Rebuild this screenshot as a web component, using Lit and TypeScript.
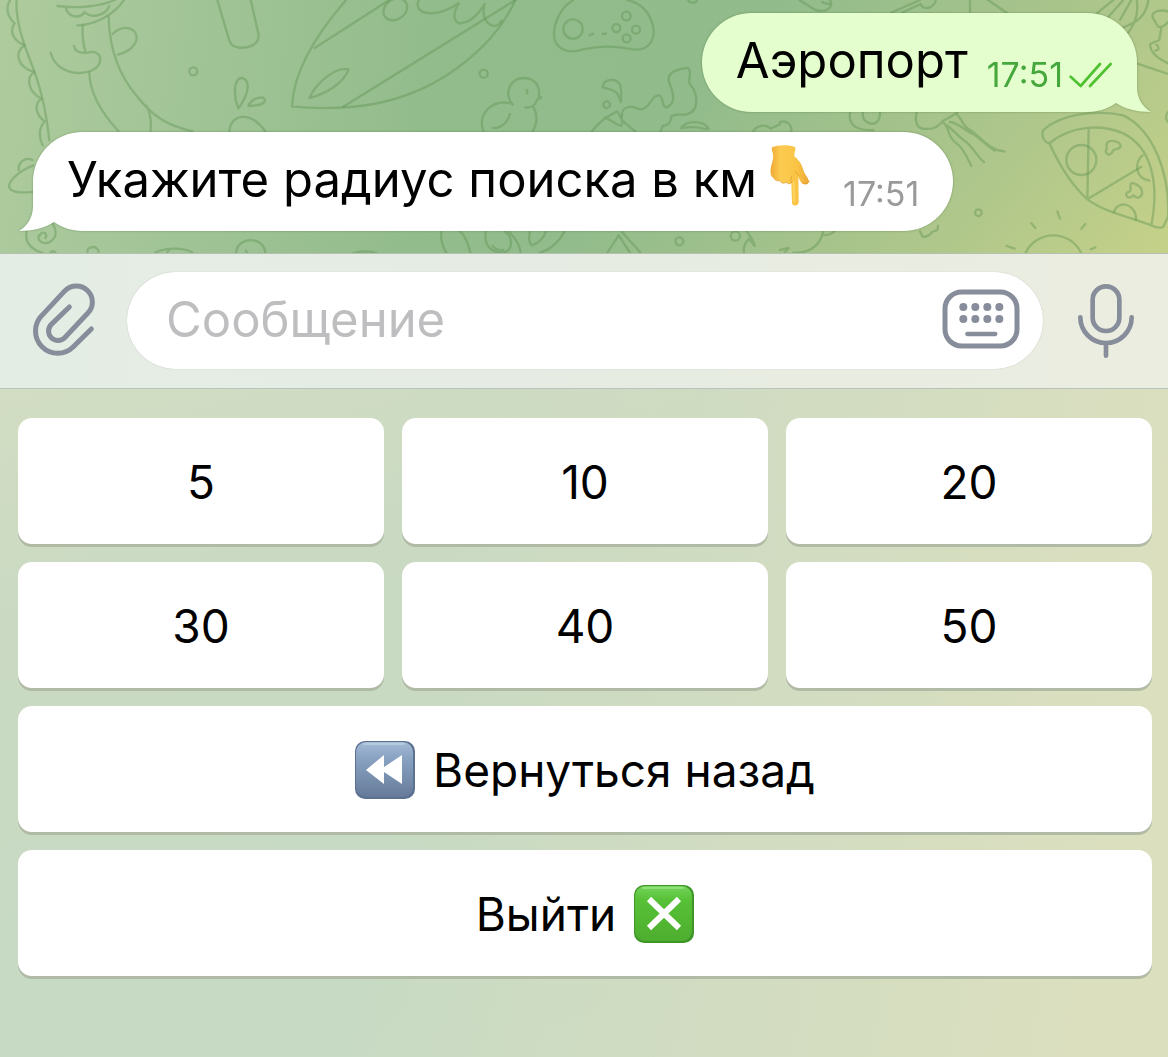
import { LitElement, html, svg, css, nothing } from "lit";
import { customElement, property } from "lit/decorators.js";

/* Line-art doodles behind the conversation. */
const doodles = svg`
  <path d="M50 0C46 50 60 105 90 180C118 250 135 310 148 420"/>
  <path d="M30 0C16 22 22 50 44 70C28 90 36 120 74 136C46 154 46 198 102 216C78 234 84 276 124 296C102 312 106 344 134 364C116 384 116 412 128 436"/>
  <path d="M172 18C230 26 300 20 345 0M198 26C206 52 240 58 254 36C272 56 316 48 328 18M232 76C290 74 345 40 372 0"/>
  <path d="M248 78C246 110 250 135 257 158M222 138C226 158 244 160 262 158C290 150 304 166 300 184C294 212 258 220 232 219C190 216 160 192 152 158"/>
  <path d="M268 218C270 290 315 350 356 394M326 50C328 150 360 230 412 290C460 350 500 376 578 394M440 318C452 340 454 370 452 394"/>
  <path d="M338 102C372 70 412 84 410 118C404 142 380 158 354 164"/>
  <path d="M652 0L688 122C696 146 730 148 758 136C776 126 778 112 774 96L752 0"/>
  <circle cx="580" cy="214" r="12"/>
  <path d="M715 326C700 290 700 232 726 234C752 240 748 280 715 326ZM745 318C758 290 796 286 795 302C788 318 764 316 745 318Z"/>
  <path d="M688 394C692 340 752 332 796 394"/>
  <path d="M100 496C50 516 18 550 30 566C40 580 70 577 100 576M56 510C54 486 76 470 98 480"/>
  <path d="M80 694C72 730 100 750 130 760M116 706C110 736 156 738 166 706C168 690 164 680 158 672M120 706C124 690 146 700 136 714"/>
  <path d="M262 756C262 736 294 736 296 756M466 758C500 742 550 742 578 758M508 748L500 760M708 758C712 708 792 708 796 758M738 752L742 760"/>
  <path d="M1060 760C1080 752 1110 752 1130 760M150 760C154 752 162 752 166 758"/>
  <path d="M1038 0C960 90 880 210 876 320C1050 334 1200 316 1340 226C1440 160 1510 80 1546 0"/>
  <path d="M944 144L1168 0M1030 320L1546 0M928 294C950 246 1010 198 1046 208C1030 250 980 280 928 294Z"/>
  <ellipse cx="1186" cy="28" rx="38" ry="30" transform="rotate(-35 1186 28)"/>
  <path d="M1256 0C1238 40 1300 60 1376 10C1352 50 1366 78 1390 68C1420 60 1436 40 1454 12C1444 50 1460 76 1484 78C1496 76 1500 70 1504 62"/>
  <path d="M1720 0C1674 26 1656 86 1664 120C1680 160 1720 158 1750 148C1800 136 1860 140 1900 148C1944 154 1966 120 1960 84C1950 30 1916 8 1882 0"/>
  <circle cx="1719" cy="87" r="29"/><circle cx="1849" cy="84" r="12"/><circle cx="1879" cy="48" r="13"/><circle cx="1908" cy="89" r="12"/><circle cx="1880" cy="115" r="12"/>
  <path d="M1768 106L1780 101M1808 102L1818 101M2064 0C2070 10 2084 12 2092 0"/>
  <circle cx="1451" cy="221" r="12"/><circle cx="1820" cy="314" r="10"/>
  <path d="M1538 314C1510 280 1530 234 1572 234C1608 236 1622 262 1616 288L1624 292L1612 298C1604 320 1590 324 1576 322M1580 270L1582 280M1538 312C1480 294 1430 340 1450 394M1530 342C1522 370 1500 386 1478 384M1600 320C1616 350 1610 374 1598 394"/>
  <path d="M1808 262C1810 236 1846 232 1860 254C1866 274 1864 290 1862 306C1854 270 1838 270 1808 262Z"/>
  <path d="M1776 394C1800 360 1830 344 1852 334C1862 350 1870 362 1866 374C1858 384 1842 362 1814 352M1866 360C1880 372 1890 384 1906 394"/>
  <path d="M1866 350C1864 318 1890 314 1920 328C1950 330 1950 286 1976 286C1994 290 1982 322 2000 322C2030 310 2020 276 2006 244C2000 214 2040 206 2064 204C2080 220 2060 238 2070 252C2100 290 2096 346 2046 344C2030 342 2022 346 2014 348C2014 364 2006 376 1988 378L1982 394"/>
  <path d="M2044 384C2060 360 2110 360 2126 386C2104 392 2110 374 2044 384ZM2260 394C2270 374 2300 372 2312 386C2324 380 2334 376 2340 372"/>
  <path d="M1324 694C1320 720 1328 740 1340 760M1380 694C1400 710 1404 736 1412 760M1458 694C1450 730 1470 760 1510 758C1540 750 1540 712 1514 694M1478 738C1490 752 1500 752 1510 750M1526 694C1552 720 1560 740 1562 758M1590 694C1586 712 1588 730 1596 736C1614 730 1630 716 1638 694M1694 694C1674 730 1650 750 1620 758"/>
  <path d="M1822 758L1856 706L1890 758M1866 696L1922 758M2240 694C2252 710 2262 722 2264 738L2248 716C2232 730 2230 746 2232 758"/>
  <circle cx="2038" cy="724" r="12"/><circle cx="2206" cy="708" r="14"/>
  <path d="M2398 0L2446 30C2484 40 2500 20 2490 0M2466 6C2478 12 2488 12 2494 14M2674 38L2760 0M2706 38L2762 12C2770 30 2790 26 2800 14C2808 8 2808 4 2806 0M2910 0V38M2964 0L3020 38"/>
  <path d="M3340 0L3290 40L3350 88C3420 70 3440 40 3445 0M3370 0L3320 56M3394 0L3360 60M3410 0C3420 60 3390 90 3370 118"/>
  <path d="M3504 34C3470 26 3450 40 3460 56L3474 80C3490 84 3500 70 3504 66M3484 84L3478 120L3450 132C3450 160 3476 176 3504 190M3470 134C3480 146 3476 150 3466 152M3410 190L3504 222M3504 336C3496 348 3496 358 3504 366"/>
  <path d="M2550 338C2544 376 2570 392 2620 390M2588 338C2586 370 2620 380 2634 362C2640 354 2640 346 2640 338M2340 366C2360 360 2376 374 2374 394"/>
  <path d="M2750 338C2742 366 2754 390 2776 386C2800 390 2820 376 2830 362L2872 338M2830 368C2850 382 2840 412 2870 430C2890 444 2900 470 2914 498M2842 376C2862 394 2870 404 2890 420C2916 434 2930 470 2952 486M2850 366C2880 370 2896 394 2920 402C2940 414 2950 430 2984 452M2868 342C2890 354 2880 376 2914 392C2940 410 2950 430 2980 444C2990 452 3002 452 3014 454"/>
  <path d="M3130 390C3180 344 3280 328 3370 346C3460 390 3510 520 3504 650L3490 680C3480 686 3466 682 3454 676C3480 540 3450 440 3370 400C3300 370 3210 378 3148 430C3128 424 3124 406 3130 390ZM3148 430C3180 500 3220 560 3262 598C3320 640 3390 650 3454 676M3266 386L3262 598L3424 500"/>
  <circle cx="3244" cy="480" r="45"/>
  <path d="M3428 466C3404 482 3402 534 3448 542M3342 636C3354 598 3410 610 3408 660M3320 440C3314 414 3360 420 3362 438C3360 452 3340 440 3336 458C3328 470 3312 460 3320 446ZM3392 556C3390 540 3424 556 3426 574C3428 590 3414 600 3400 586C3386 602 3370 584 3384 576C3396 574 3390 566 3392 556Z"/>
  <circle cx="2935" cy="638" r="10"/>
  <path d="M3076 760C3110 688 3210 688 3244 760M3172 634L3180 656M3094 670L3106 684M3256 672L3244 686M3020 738L3044 746M3272 748L3286 742"/>
  <path d="M2470 694C2460 736 2430 760 2380 758M2466 704C2480 708 2496 700 2504 694M2760 694L2768 710C2780 712 2790 704 2796 696L2812 690L2814 678M2340 750L2366 744L2354 758"/>
`;

const clipIcon = html`<svg width="65" height="75" viewBox="95 93 195 225" fill="none" stroke="#878d9a" stroke-width="15" stroke-linecap="round" stroke-linejoin="round" aria-hidden="true">
  <path d="M207 168L153 220A28 28 0 0 0 193 260L262 187A48 48 0 0 0 194 119L125 193A66 66 0 0 0 219 287L273 234"/></svg>`;

const keyboardIcon = html`<svg width="78" height="60" viewBox="125 117 234 180" fill="#878d9a" aria-hidden="true">
  <rect x="134" y="126" width="216" height="162" rx="50" fill="none" stroke="#878d9a" stroke-width="15"/>
  ${[171, 207].map((y) => [189, 225, 261, 297].map((x) => svg`<circle cx=${x} cy=${y} r="12"/>`))}
  <path d="M201 252H285" stroke="#878d9a" stroke-width="13" stroke-linecap="round"/></svg>`;

const micIcon = html`<svg width="58" height="76" viewBox="531 98 174 228" fill="none" stroke="#878d9a" stroke-width="14" stroke-linecap="round" aria-hidden="true">
  <rect x="578" y="108" width="80" height="134" rx="40"/>
  <path d="M541 201A77 77 0 0 0 695 201M618 280V316"/></svg>`;

const ticksIcon = html`<svg class="ticks" width="45" height="26" viewBox="864 184 135 78" fill="none" stroke="#50c232" stroke-width="8" stroke-linecap="round" stroke-linejoin="round" role="img" aria-label="Прочитано">
  <path d="M872 228L902 256L960 190M930 256L992 190"/></svg>`;

const handIcon = html`<svg class="hand" width="42" height="64" viewBox="24 20 126 192" role="img" aria-label="👇">
  <defs>
    <linearGradient id="skin" x1="0" y1="0" x2="1" y2="0"><stop offset="0" stop-color="#f0aa35"/><stop offset=".25" stop-color="#fbcb50"/><stop offset=".7" stop-color="#fac445"/><stop offset="1" stop-color="#eba636"/></linearGradient>
  </defs>
  <path d="M33 30C50 22 84 22 102 29C106 34 98 48 101 58C112 66 122 78 128 100C132 114 142 120 144 132C142 144 130 142 122 136C116 130 114 124 112 116L113 194C112 208 94 208 93 196L91 136C88 142 78 140 76 134C70 140 60 138 57 130C50 132 40 128 38 122C26 118 28 96 31 84C34 72 38 64 36 52C35 44 31 36 33 30Z" fill="url(#skin)"/>
  <path d="M38 122C42 130 50 132 57 130C60 138 70 140 76 134C78 140 88 142 91 136M91 136C90 128 90 122 92 116M112 116C110 108 106 104 102 102M122 136C130 142 142 142 144 132" fill="none" stroke="#dc9130" stroke-width="3" stroke-linecap="round" opacity=".6"/>
  <path d="M98 136L100 192" stroke="#ffe07a" stroke-width="5" stroke-linecap="round" opacity=".6"/></svg>`;

const rewindIcon = html`<svg width="60" height="58" viewBox="0 0 60 58" role="img" aria-label="⏪">
  <defs><linearGradient id="blue" x1="0" y1="0" x2="0" y2="1"><stop offset="0" stop-color="#a3bad5"/><stop offset=".3" stop-color="#89a2c2"/><stop offset="1" stop-color="#667b99"/></linearGradient></defs>
  <rect width="60" height="58" rx="10" fill="#5c7191"/>
  <rect x="1" y="1" width="57" height="55" rx="10" fill="url(#blue)"/>
  <path d="M9 3H49" stroke="#c6d6e8" stroke-width="2" stroke-linecap="round" opacity=".6"/>
  <path d="M11 29L29 14V26L47 14V43L29 31V43Z" fill="#fff"/></svg>`;

const crossIcon = html`<svg width="60" height="58" viewBox="0 0 60 58" role="img" aria-label="❎">
  <defs><linearGradient id="green" x1="0" y1="0" x2="0" y2="1"><stop offset="0" stop-color="#74d45a"/><stop offset=".25" stop-color="#57c137"/><stop offset="1" stop-color="#4eae2e"/></linearGradient></defs>
  <rect width="60" height="58" rx="10" fill="#3f9628"/>
  <rect x="1" y="1" width="57" height="55" rx="10" fill="url(#green)"/>
  <path d="M9 3H49" stroke="#a4e893" stroke-width="2" stroke-linecap="round" opacity=".6"/>
  <path d="M15 14L45 43M45 14L15 43" stroke="#fff" stroke-width="6"/></svg>`;

@customElement("chat-bubble")
class ChatBubble extends LitElement {
  @property() text = "";
  @property() time = "";
  @property({ type: Boolean, reflect: true }) outgoing = false;

  static styles = css`
    :host { display: flex; position: relative; gap: 32px; align-items: flex-end; align-self: flex-start;
      box-sizing: border-box; padding: 16px 34px 19px; border-radius: 50px; background: #fff; color: #000;
      filter: drop-shadow(0 0 1px rgba(50, 90, 40, 0.45)); }
    :host([outgoing]) { align-self: flex-end; gap: 19px; padding-right: 24px; background: #e5fecd; }
    .text { display: flex; gap: 12px; align-items: center; font-size: 49px; line-height: 64px; }
    .meta { display: flex; gap: 5px; align-items: center; padding-bottom: 2px; font-size: 34px; line-height: 32px;
      color: #9a9a9a; }
    :host([outgoing]) .meta { color: #46a83c; }
    .tail { position: absolute; bottom: 0; left: -14px; fill: #fff; transform: scaleX(-1); }
    :host([outgoing]) .tail { left: auto; right: -14px; fill: #e5fecd; transform: none; }
    svg { display: block; }
    .hand { padding-bottom: 4px; margin-top: -4px; }
  `;

  render() {
    return html`
      <svg class="tail" width="48" height="50" viewBox="0 0 48 50" aria-hidden="true">
        <path d="M34 0V25C34 37 40 45 48 50C34 50 22 47 13 41L0 20Z"/>
      </svg>
      <span class="text">${this.text}${this.outgoing ? nothing : handIcon}</span>
      <span class="meta"><time>${this.time}</time>${this.outgoing ? ticksIcon : nothing}</span>
    `;
  }
}

@customElement("app-root")
class AppRoot extends LitElement {
  static styles = css`
    :host { display: flex; flex-direction: column; min-height: 100vh; font-family: Inter, "Liberation Sans", sans-serif; color: #000; }
    svg { display: block; }
    button { font: inherit; color: inherit; border: 0; margin: 0; padding: 0; background: none; cursor: pointer; }
    .chat { position: relative; display: flex; flex-direction: column; gap: 20px; padding: 13px 31px 22px 33px; overflow: hidden;
      background: linear-gradient(130deg, rgba(160, 195, 138, 0) 56%, #b2c88b 85%, #c5d188 100%),
        linear-gradient(97deg, #aecb9d 0%, #a3c598 14%, #93bc8c 36%, #8fba8b 100%); }
    .wallpaper { position: absolute; inset: 0; width: 100%; height: 100%; fill: none; stroke: #5c9150; stroke-opacity: 0.4; stroke-width: 7;
      stroke-linecap: round; stroke-linejoin: round; }
    .composer { display: flex; align-items: center; padding: 18px 0 19px; border-top: 1px solid #b4c0b2; border-bottom: 1px solid #b9c3bd;
      background: linear-gradient(90deg, #e4ede4, #e6ece3 45%, #ebede0); }
    .tool { flex: 0 0 125px; display: flex; justify-content: center; }
    .attach { padding: 0 0 3px 3px; box-sizing: border-box; }
    .field { flex: 1; min-width: 0; display: flex; align-items: center; gap: 20px; margin-left: 2px; padding: 0 23px 0 39px; border-radius: 50px;
      background: #fff; box-shadow: 0 0 1px rgba(0, 0, 0, 0.25); }
    .field button { padding-bottom: 3px; }
    input { flex: 1; min-width: 0; height: 97px; box-sizing: border-box; padding: 0 0 2px; border: 0; outline: 0; background: none;
      font: inherit; font-size: 49px; color: #000; }
    input::placeholder { color: #bebec0; opacity: 1; }
    .keyboard { flex: 1; padding: 29px 16px 29px 18px;
      background: linear-gradient(100deg, rgba(219, 223, 190, 0) 36%, #d2dcc1 66%, #dbdfbe 94%),
        linear-gradient(165deg, #d2ddc3 0%, #cadac2 24%, #c7dac3 60%, #c9dbc4 100%); }
    .keys { display: grid; grid-template-columns: repeat(3, 1fr); gap: 18px; }
    .key { display: flex; align-items: center; justify-content: center; gap: 18px; height: 126px; box-sizing: border-box; padding-top: 2px;
      border-radius: 14px; background: #fff; box-shadow: 0 3px 0 #b0baa5; font-size: 46px; line-height: 60px; }
    .wide { grid-column: 1 / -1; }
  `;

  render() {
    return html`
      <main class="chat">
        <svg class="wallpaper" viewBox="0 0 3504 762" preserveAspectRatio="xMinYMin slice" aria-hidden="true">${doodles}</svg>
        <chat-bubble outgoing text="Аэропорт" time="17:51"></chat-bubble>
        <chat-bubble text="Укажите радиус поиска в км" time="17:51"></chat-bubble>
      </main>
      <form class="composer" @submit=${(e: Event) => e.preventDefault()}>
        <button class="tool attach" type="button" aria-label="Прикрепить файл">${clipIcon}</button>
        <div class="field">
          <input type="text" placeholder="Сообщение" aria-label="Сообщение" />
          <button type="button" aria-label="Клавиатура">${keyboardIcon}</button>
        </div>
        <button class="tool" type="button" aria-label="Голосовое сообщение">${micIcon}</button>
      </form>
      <section class="keyboard">
        <div class="keys">
          ${["5", "10", "20", "30", "40", "50"].map((n) => html`<button class="key" type="button">${n}</button>`)}
          <button class="key wide" type="button">${rewindIcon}<span>Вернуться назад</span></button>
          <button class="key wide" type="button"><span>Выйти</span>${crossIcon}</button>
        </div>
      </section>
    `;
  }
}
